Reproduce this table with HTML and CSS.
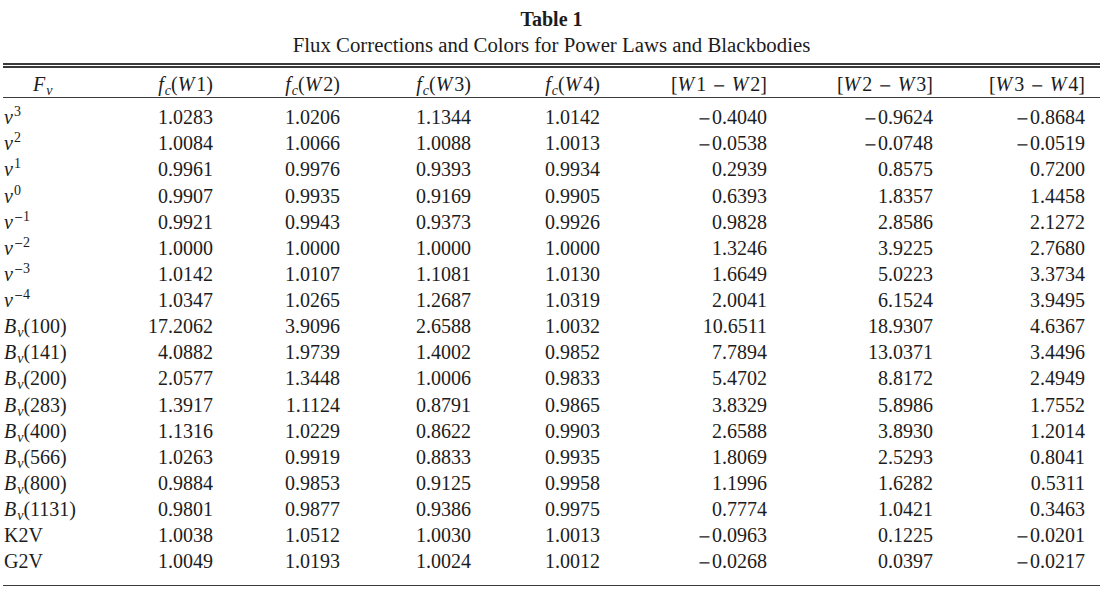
FILE: index.html
```html
<!DOCTYPE html>
<html>
<head>
<meta charset="utf-8">
<link rel="stylesheet" href="styles.css">
</head>
<body>
<div class="page">
  <div class="caption">
    <div class="title">Table 1</div>
    <div class="subtitle">Flux Corrections and Colors for Power Laws and Blackbodies</div>
  </div>
  <div class="double-rule"></div>
  <table class="data">
    <colgroup>
      <col class="c0"><col class="c1"><col class="c2"><col class="c3"><col class="c4"><col class="c5"><col class="c6"><col class="c7">
    </colgroup>
    <thead>
      <tr>
        <th class="first"><i>F</i><sub>ν</sub></th>
        <th><i>f</i><sub>c</sub>(<i class="w">W</i>1)</th>
        <th><i>f</i><sub>c</sub>(<i class="w">W</i>2)</th>
        <th><i>f</i><sub>c</sub>(<i class="w">W</i>3)</th>
        <th><i>f</i><sub>c</sub>(<i class="w">W</i>4)</th>
        <th>[<i class="w">W</i>1<span class="op">−</span><i class="w">W</i>2]</th>
        <th>[<i class="w">W</i>2<span class="op">−</span><i class="w">W</i>3]</th>
        <th class="last">[<i class="w">W</i>3<span class="op">−</span><i class="w">W</i>4]</th>
      </tr>
    </thead>
    <tbody>
      <tr class="top"><td><i>ν</i><sup>3</sup></td><td>1.0283</td><td>1.0206</td><td>1.1344</td><td>1.0142</td><td><span class="m">−</span>0.4040</td><td><span class="m">−</span>0.9624</td><td class="last"><span class="m">−</span>0.8684</td></tr>
      <tr><td><i>ν</i><sup>2</sup></td><td>1.0084</td><td>1.0066</td><td>1.0088</td><td>1.0013</td><td><span class="m">−</span>0.0538</td><td><span class="m">−</span>0.0748</td><td class="last"><span class="m">−</span>0.0519</td></tr>
      <tr><td><i>ν</i><sup>1</sup></td><td>0.9961</td><td>0.9976</td><td>0.9393</td><td>0.9934</td><td>0.2939</td><td>0.8575</td><td class="last">0.7200</td></tr>
      <tr><td><i>ν</i><sup>0</sup></td><td>0.9907</td><td>0.9935</td><td>0.9169</td><td>0.9905</td><td>0.6393</td><td>1.8357</td><td class="last">1.4458</td></tr>
      <tr><td><i>ν</i><sup><span class="sm">−</span>1</sup></td><td>0.9921</td><td>0.9943</td><td>0.9373</td><td>0.9926</td><td>0.9828</td><td>2.8586</td><td class="last">2.1272</td></tr>
      <tr><td><i>ν</i><sup><span class="sm">−</span>2</sup></td><td>1.0000</td><td>1.0000</td><td>1.0000</td><td>1.0000</td><td>1.3246</td><td>3.9225</td><td class="last">2.7680</td></tr>
      <tr><td><i>ν</i><sup><span class="sm">−</span>3</sup></td><td>1.0142</td><td>1.0107</td><td>1.1081</td><td>1.0130</td><td>1.6649</td><td>5.0223</td><td class="last">3.3734</td></tr>
      <tr><td><i>ν</i><sup><span class="sm">−</span>4</sup></td><td>1.0347</td><td>1.0265</td><td>1.2687</td><td>1.0319</td><td>2.0041</td><td>6.1524</td><td class="last">3.9495</td></tr>
      <tr><td><i>B</i><sub>ν</sub>(100)</td><td>17.2062</td><td>3.9096</td><td>2.6588</td><td>1.0032</td><td>10.6511</td><td>18.9307</td><td class="last">4.6367</td></tr>
      <tr><td><i>B</i><sub>ν</sub>(141)</td><td>4.0882</td><td>1.9739</td><td>1.4002</td><td>0.9852</td><td>7.7894</td><td>13.0371</td><td class="last">3.4496</td></tr>
      <tr><td><i>B</i><sub>ν</sub>(200)</td><td>2.0577</td><td>1.3448</td><td>1.0006</td><td>0.9833</td><td>5.4702</td><td>8.8172</td><td class="last">2.4949</td></tr>
      <tr><td><i>B</i><sub>ν</sub>(283)</td><td>1.3917</td><td>1.1124</td><td>0.8791</td><td>0.9865</td><td>3.8329</td><td>5.8986</td><td class="last">1.7552</td></tr>
      <tr><td><i>B</i><sub>ν</sub>(400)</td><td>1.1316</td><td>1.0229</td><td>0.8622</td><td>0.9903</td><td>2.6588</td><td>3.8930</td><td class="last">1.2014</td></tr>
      <tr><td><i>B</i><sub>ν</sub>(566)</td><td>1.0263</td><td>0.9919</td><td>0.8833</td><td>0.9935</td><td>1.8069</td><td>2.5293</td><td class="last">0.8041</td></tr>
      <tr><td><i>B</i><sub>ν</sub>(800)</td><td>0.9884</td><td>0.9853</td><td>0.9125</td><td>0.9958</td><td>1.1996</td><td>1.6282</td><td class="last">0.5311</td></tr>
      <tr><td><i>B</i><sub>ν</sub>(1131)</td><td>0.9801</td><td>0.9877</td><td>0.9386</td><td>0.9975</td><td>0.7774</td><td>1.0421</td><td class="last">0.3463</td></tr>
      <tr><td>K2V</td><td>1.0038</td><td>1.0512</td><td>1.0030</td><td>1.0013</td><td><span class="m">−</span>0.0963</td><td>0.1225</td><td class="last"><span class="m">−</span>0.0201</td></tr>
      <tr class="bottom"><td>G2V</td><td>1.0049</td><td>1.0193</td><td>1.0024</td><td>1.0012</td><td><span class="m">−</span>0.0268</td><td>0.0397</td><td class="last"><span class="m">−</span>0.0217</td></tr>
    </tbody>
  </table>
</div>
</body>
</html>
```

FILE: styles.css
```css
html, body {
  margin: 0;
  padding: 0;
  background: #ffffff;
}

body {
  font-family: "Liberation Serif", "Times New Roman", serif;
  font-size: 20px;
  color: #1c1c1c;
}

.page {
  width: 1097px;
  padding-left: 3px;
}

.caption {
  padding-top: 7px;
  text-align: center;
}

.title {
  font-weight: bold;
  line-height: 25px;
}

.subtitle {
  font-size: 20.8px;
  line-height: 25px;
}

.double-rule {
  margin-top: 6px;
  height: 1px;
  border-top: 2px solid #3a3a3a;
  border-bottom: 2px solid #3a3a3a;
}

.data {
  width: 1097px;
  table-layout: fixed;
  border-collapse: collapse;
  border-spacing: 0;
}

.c0 { width: 97px; }
.c1 { width: 113px; }
.c2 { width: 127px; }
.c3 { width: 131px; }
.c4 { width: 129px; }
.c5 { width: 167px; }
.c6 { width: 166px; }
.c7 { width: 167px; }

.data th,
.data td {
  padding: 0;
  text-align: right;
  white-space: nowrap;
  font-weight: normal;
  line-height: 26.12px;
  height: 26.12px;
}

.data th {
  padding-top: 3px;
  padding-bottom: 0;
  border-bottom: 1.5px solid #3a3a3a;
  height: 26px;
}

.data th.first {
  text-align: left;
  padding-left: 30px;
}

.data td:first-child {
  text-align: left;
  padding-left: 1px;
}

.data .last {
  padding-right: 15px;
}

.data tr.top td {
  padding-top: 6px;
}

.data tr.bottom td {
  padding-bottom: 11px;
  border-bottom: 1.5px solid #3a3a3a;
}

.data i {
  font-style: italic;
}

.data .w {
  margin-right: 2px;
}

.data sup,
.data sub {
  font-size: 14px;
  line-height: 0;
}

.data sup {
  vertical-align: 8px;
  margin-left: 1px;
}

.data sub {
  font-style: italic;
  vertical-align: -4px;
  margin-left: 1px;
}

.op {
  font-family: "DejaVu Serif", serif;
  font-size: 16px;
  line-height: 0;
  margin: 0 6px;
}

.m {
  font-family: "DejaVu Serif", serif;
  font-size: 16px;
  line-height: 0;
  margin-right: 1px;
}

.sm {
  font-family: "DejaVu Serif", serif;
  font-size: 11px;
  line-height: 0;
}
```
